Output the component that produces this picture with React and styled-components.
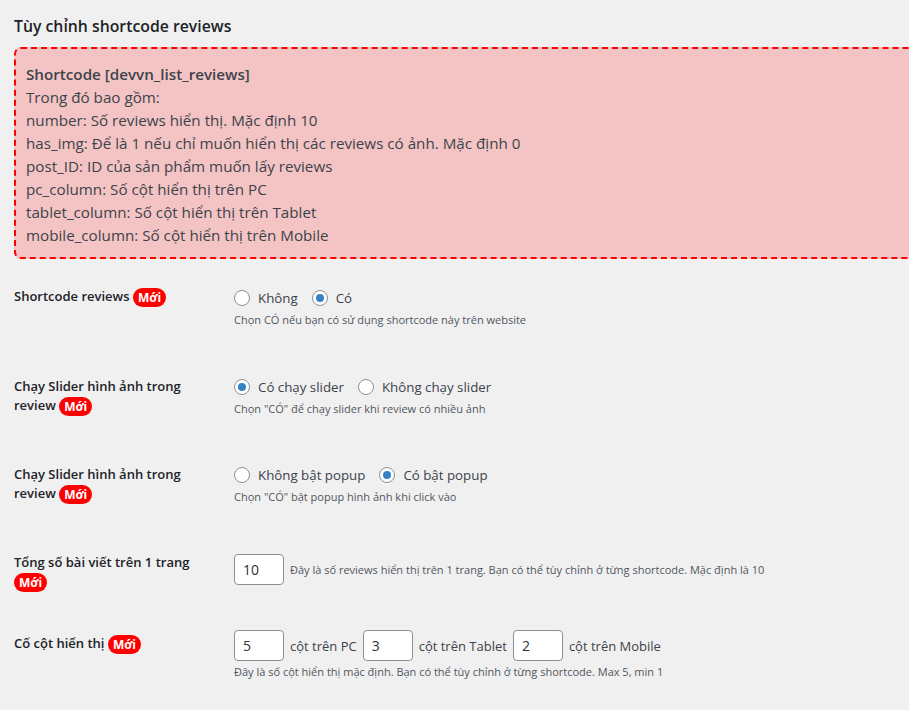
import React from 'react';
import styled, { createGlobalStyle } from 'styled-components';

const GlobalStyle = createGlobalStyle`
  html, body {
    margin: 0;
    padding: 0;
    background: #f0f0f1;
    overflow: hidden;
  }
  body {
    font-family: "Open Sans", "Noto Sans", sans-serif;
    color: #3c434a;
  }
`;

const Page = styled.div`
  padding: 0 0 0 14px;
`;

const Title = styled.h2`
  margin: 0;
  padding: 14px 0 0;
  font-size: 15.8px;
  line-height: 24px;
  font-weight: 600;
  color: #1d2327;
`;

const NoticeBox = styled.div`
  margin: 9px -40px 8px 0;
  padding: 14px 10px 10px;
  background: #f4c4c4;
  border: 2px dashed #ff0000;
  border-radius: 7px;
  font-size: 15.2px;
  line-height: 23px;
  color: #3c434a;
  strong {
    font-weight: 600;
  }
`;

const Row = styled.div`
  display: grid;
  grid-template-columns: 220px 1fr;
`;

const Label = styled.div`
  padding: 20px 10px 22px 0;
  font-size: 13px;
  line-height: 19px;
  font-weight: 600;
  color: #1d2327;
`;

const Badge = styled.span`
  display: inline-block;
  vertical-align: middle;
  background: #ff0000;
  color: #fff;
  font-size: 12px;
  font-weight: 700;
  line-height: 19px;
  padding: 0 5px;
  border-radius: 10px;
`;

const Field = styled.div`
  padding: ${p => p.$pt}px 0 ${p => p.$pb}px;
`;

const Options = styled.div`
  display: flex;
  align-items: center;
  height: 22px;
`;

const Option = styled.label`
  display: flex;
  align-items: center;
  gap: 8px;
  margin-right: 14px;
  font-size: 13.3px;
  color: #3c434a;
`;

const Radio = styled.span`
  width: 16px;
  height: 16px;
  box-sizing: border-box;
  border: 1px solid #8c8f94;
  border-radius: 50%;
  background: #fff;
  display: flex;
  align-items: center;
  justify-content: center;
  &::after {
    content: "";
    width: 8px;
    height: 8px;
    border-radius: 50%;
    background: ${p => (p.$checked ? '#3582c4' : 'transparent')};
  }
`;

const Desc = styled.p`
  margin: ${p => p.$mt ?? 2}px 0 0;
  font-size: 11px;
  line-height: 18px;
  color: #50575e;
`;

const InputLine = styled.div`
  display: flex;
  align-items: center;
  gap: 6px;
  color: #3c434a;
`;

const NumberBox = styled.div`
  width: 50px;
  height: 31px;
  box-sizing: border-box;
  border: 1px solid #8c8f94;
  border-radius: 4px;
  background: #fff;
  padding: 0 8px;
  display: flex;
  align-items: center;
  font-size: 14px;
  color: #2c3338;
`;

const Inline = styled.span`
  font-size: ${p => p.$size || 13}px;
  color: ${p => p.$color || '#3c434a'};
`;

function RadioGroup({ options, value }) {
  return (
    <Options>
      {options.map(o => (
        <Option key={o}>
          <Radio $checked={o === value} />
          {o}
        </Option>
      ))}
    </Options>
  );
}

export default function App() {
  return (
    <>
      <GlobalStyle />
      <Page>
        <Title>Tùy chỉnh shortcode reviews</Title>
        <NoticeBox>
          <strong>Shortcode [devvn_list_reviews]</strong>
          <br />Trong đó bao gồm:
          <br />number: Số reviews hiển thị. Mặc định 10
          <br />has_img: Để là 1 nếu chỉ muốn hiển thị các reviews có ảnh. Mặc định 0
          <br />post_ID: ID của sản phẩm muốn lấy reviews
          <br />pc_column: Số cột hiển thị trên PC
          <br />tablet_column: Số cột hiển thị trên Tablet
          <br />mobile_column: Số cột hiển thị trên Mobile
        </NoticeBox>

        <Row>
          <Label>Shortcode reviews <Badge>Mới</Badge></Label>
          <Field $pt={20} $pb={28}>
            <RadioGroup options={['Không', 'Có']} value="Có" />
            <Desc>Chọn CÓ nếu bạn có sử dụng shortcode này trên website</Desc>
          </Field>
        </Row>

        <Row>
          <Label>Chạy Slider hình ảnh trong review <Badge>Mới</Badge></Label>
          <Field $pt={19} $pb={27}>
            <RadioGroup options={['Có chạy slider', 'Không chạy slider']} value="Có chạy slider" />
            <Desc>Chọn "CÓ" để chạy slider khi review có nhiều ảnh</Desc>
          </Field>
        </Row>

        <Row>
          <Label>Chạy Slider hình ảnh trong review <Badge>Mới</Badge></Label>
          <Field $pt={19} $pb={27}>
            <RadioGroup options={['Không bật popup', 'Có bật popup']} value="Có bật popup" />
            <Desc>Chọn "CÓ" bật popup hình ảnh khi click vào</Desc>
          </Field>
        </Row>

        <Row>
          <Label>Tổng số bài viết trên 1 trang <Badge>Mới</Badge></Label>
          <Field $pt={21} $pb={28}>
            <InputLine>
              <NumberBox>10</NumberBox>
              <Inline $size={11} $color="#50575e">
                Đây là số reviews hiển thị trên 1 trang. Bạn có thể tùy chỉnh ở từng shortcode. Mặc định là 10
              </Inline>
            </InputLine>
          </Field>
        </Row>

        <Row>
          <Label>Cố cột hiển thị <Badge>Mới</Badge></Label>
          <Field $pt={16} $pb={20}>
            <InputLine>
              <NumberBox>5</NumberBox>
              <Inline>cột trên PC</Inline>
              <NumberBox>3</NumberBox>
              <Inline>cột trên Tablet</Inline>
              <NumberBox>2</NumberBox>
              <Inline>cột trên Mobile</Inline>
            </InputLine>
            <Desc $mt={2}>Đây là số cột hiển thị mặc định. Bạn có thể tùy chỉnh ở từng shortcode. Max 5, min 1</Desc>
          </Field>
        </Row>
      </Page>
    </>
  );
}
